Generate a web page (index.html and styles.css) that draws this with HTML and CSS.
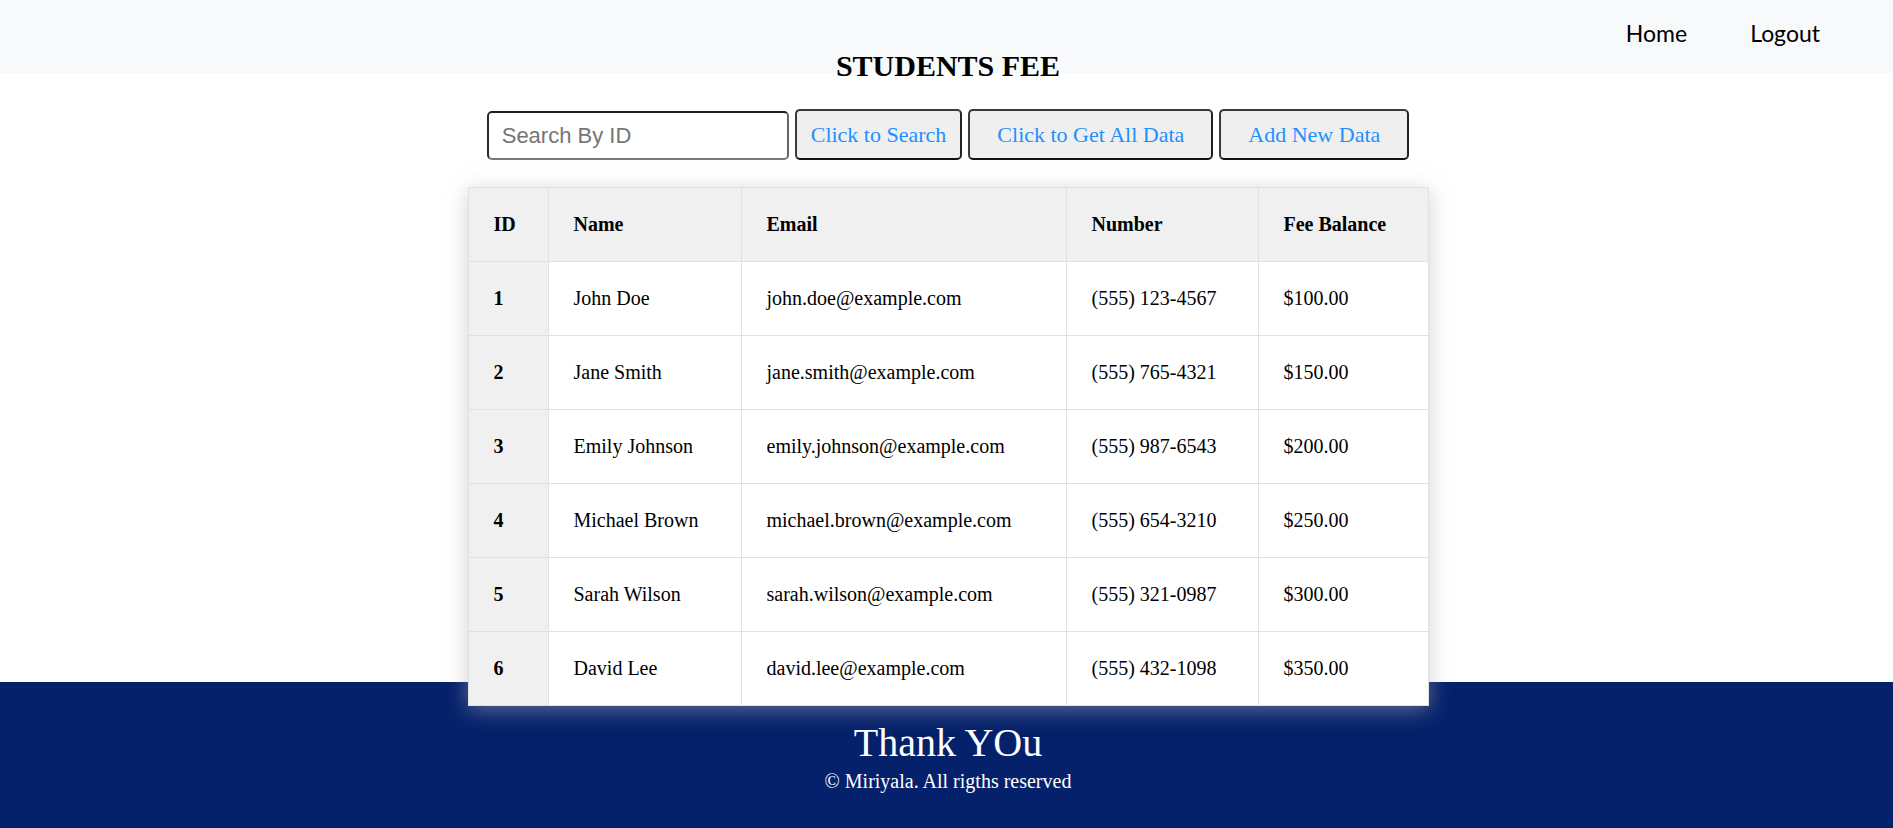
FILE: index.html
```html
<!DOCTYPE html>
<html lang="en">
<head>
<meta charset="utf-8">
<title>Students Fee</title>
<link rel="stylesheet" href="styles.css">
</head>
<body>
<header class="topbar">
  <nav class="nav">
    <a class="nav-link" href="#">Home</a>
    <a class="nav-link" href="#">Logout</a>
  </nav>
</header>
<main class="content">
  <h2 class="title">STUDENTS FEE</h2>
  <div class="controls">
    <input class="search" type="text" placeholder="Search By ID">
    <button class="btn btn-search">Click to Search</button>
    <button class="btn btn-wide">Click to Get All Data</button>
    <button class="btn btn-wide">Add New Data</button>
  </div>
  <div class="table-wrap">
    <table class="fee-table">
      <thead>
        <tr><th class="c-id">ID</th><th class="c-name">Name</th><th class="c-email">Email</th><th class="c-num">Number</th><th class="c-fee">Fee Balance</th></tr>
      </thead>
      <tbody>
        <tr><td class="c-id">1</td><td>John Doe</td><td>john.doe@example.com</td><td>(555) 123-4567</td><td>$100.00</td></tr>
        <tr><td class="c-id">2</td><td>Jane Smith</td><td>jane.smith@example.com</td><td>(555) 765-4321</td><td>$150.00</td></tr>
        <tr><td class="c-id">3</td><td>Emily Johnson</td><td>emily.johnson@example.com</td><td>(555) 987-6543</td><td>$200.00</td></tr>
        <tr><td class="c-id">4</td><td>Michael Brown</td><td>michael.brown@example.com</td><td>(555) 654-3210</td><td>$250.00</td></tr>
        <tr><td class="c-id">5</td><td>Sarah Wilson</td><td>sarah.wilson@example.com</td><td>(555) 321-0987</td><td>$300.00</td></tr>
        <tr><td class="c-id">6</td><td>David Lee</td><td>david.lee@example.com</td><td>(555) 432-1098</td><td>$350.00</td></tr>
      </tbody>
    </table>
  </div>
</main>
<footer class="footer">
  <p class="thanks">Thank YOu</p>
  <p class="copy">© Miriyala. All rigths reserved</p>
</footer>
</body>
</html>
```
FILE: styles.css
```css
html, body {
  margin: 0;
  padding: 0;
  background: #ffffff;
}
body {
  font-family: "Liberation Serif", "Times New Roman", serif;
  color: #000;
  min-height: 100vh;
  display: flex;
  flex-direction: column;
}
.topbar {
  height: 73px;
  background: #f8f9fa;
  display: flex;
  justify-content: flex-end;
  align-items: center;
  flex-shrink: 0;
}
.nav {
  display: flex;
  gap: 63px;
  padding-right: 73px;
  padding-bottom: 7px;
}
.nav-link {
  font-family: "Lato", "Open Sans", sans-serif;
  font-size: 23px;
  color: #000;
  text-decoration: none;
}
.content {
  display: flex;
  flex-direction: column;
  align-items: center;
  flex-shrink: 0;
  padding-left: 3px;
}
.title {
  margin: -24px 0 0;
  font-size: 30px;
  font-weight: bold;
  line-height: normal;
  text-align: center;
}
.controls {
  display: flex;
  align-items: flex-start;
  gap: 6px;
  margin-top: 26px;
}
.search {
  box-sizing: border-box;
  width: 302px;
  height: 49px;
  padding: 0 13px;
  font-family: "Liberation Sans", Arial, sans-serif;
  font-size: 22px;
  border-width: 2px;
  border-style: solid;
  border-color: #1f1f1f #666 #777 #2a2a2a;
  border-radius: 5px;
  background: #fff;
  margin-top: 2px;
}
.search::placeholder {
  color: #757575;
}
.btn {
  font-family: "Liberation Serif", "Times New Roman", serif;
  font-size: 22px;
  line-height: normal;
  color: #1e90ff;
  background: #efefef;
  border: 2px solid #3a3a3a;
  border-bottom-color: #111;
  border-right-color: #222;
  border-radius: 5px;
  padding: 11px 14px 10px;
  cursor: pointer;
}
.btn-wide {
  padding: 11px 27px 10px;
}
.table-wrap {
  margin-top: 27px;
  position: relative;
  z-index: 1;
  box-shadow: 0 4px 20px rgba(170, 170, 180, 0.55);
}
.fee-table {
  border-collapse: collapse;
  width: 960px;
  table-layout: fixed;
  background: #fff;
  font-size: 20px;
}
.fee-table th,
.fee-table td {
  box-sizing: border-box;
  border: 1px solid #dfe1e4;
  padding: 25px 25px;
  text-align: left;
  line-height: 23px;
  white-space: nowrap;
}
.fee-table th {
  background: #f0f0f0;
  font-weight: bold;
}
.fee-table td.c-id {
  background: #f0f0f0;
  font-weight: bold;
}
.c-id { width: 80px; }
.c-name { width: 193px; }
.c-email { width: 325px; }
.c-num { width: 192px; }
.c-fee { width: 170px; }
.footer {
  flex: 1 0 auto;
  margin-top: -24px;
  background: #05216b;
  color: #fff;
  text-align: center;
  padding: 37px 0 38px 3px;
}
.thanks {
  margin: 0;
  font-size: 40px;
  line-height: normal;
}
.copy {
  margin: 4px 0 0;
  font-size: 20px;
  line-height: normal;
}
```
